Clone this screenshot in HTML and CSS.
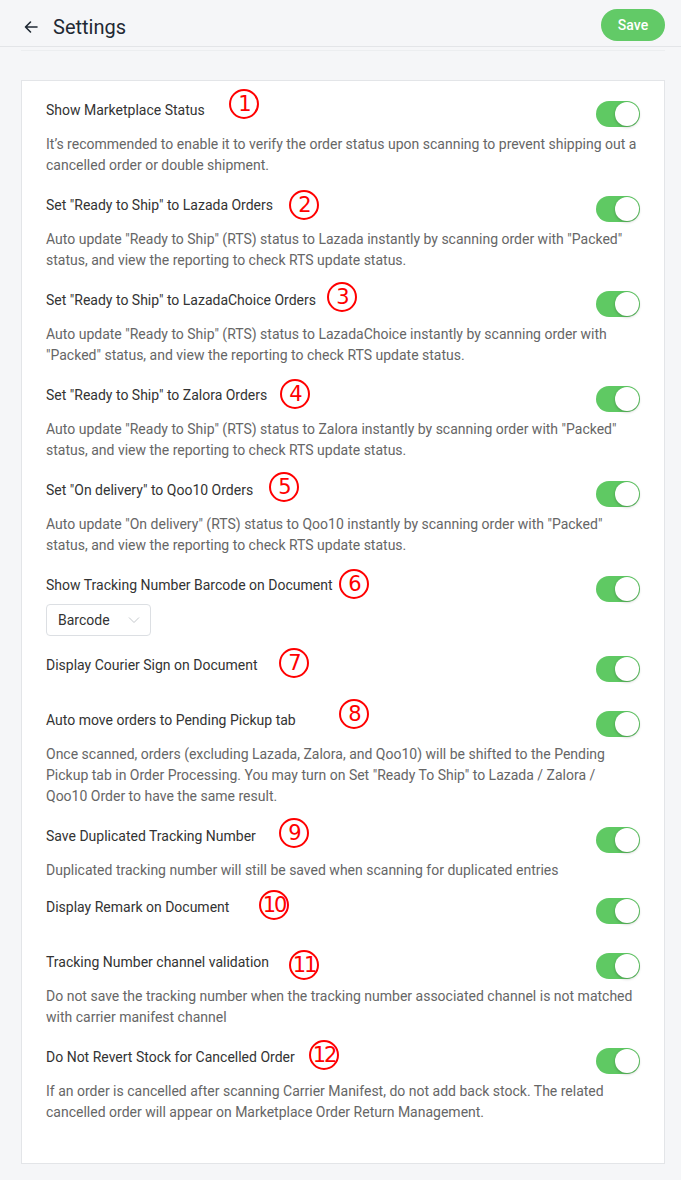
FILE: index.html
```html
<!DOCTYPE html>
<html lang="en">
<head>
  <meta charset="UTF-8">
  <title>Settings</title>
  <link rel="stylesheet" href="styles.css">
</head>
<body>

  <div class="topbar">
    <div class="topbar-left">
      <svg class="back" width="16" height="16" viewBox="0 0 16 16">
        <path d="M14 8H2.5M7.5 3L2.5 8l5 5" fill="none" stroke="#1f2933" stroke-width="1.6" stroke-linecap="round" stroke-linejoin="round"/>
      </svg>
      <h1>Settings</h1>
    </div>
    <button class="save">Save</button>
  </div>
  <div class="sub-line"></div>

  <div class="card">

    <div class="item">
      <div class="item-head">
        <span class="title">Show Marketplace Status</span>
        <span class="mark" style="left:183px;top:-11px">1</span>
        <span class="toggle"></span>
      </div>
      <p class="desc">It’s recommended to enable it to verify the order status upon scanning to prevent shipping out a cancelled order or double shipment.</p>
    </div>

    <div class="item">
      <div class="item-head">
        <span class="title">Set "Ready to Ship" to Lazada Orders</span>
        <span class="mark" style="left:243px;top:-5px">2</span>
        <span class="toggle"></span>
      </div>
      <p class="desc">Auto update "Ready to Ship" (RTS) status to Lazada instantly by scanning order with "Packed" status, and view the reporting to check RTS update status.</p>
    </div>

    <div class="item">
      <div class="item-head">
        <span class="title">Set "Ready to Ship" to LazadaChoice Orders</span>
        <span class="mark" style="left:281px;top:-8px">3</span>
        <span class="toggle"></span>
      </div>
      <p class="desc">Auto update "Ready to Ship" (RTS) status to LazadaChoice instantly by scanning order with "Packed" status, and view the reporting to check RTS update status.</p>
    </div>

    <div class="item">
      <div class="item-head">
        <span class="title">Set "Ready to Ship" to Zalora Orders</span>
        <span class="mark" style="left:234px;top:-6px">4</span>
        <span class="toggle"></span>
      </div>
      <p class="desc">Auto update "Ready to Ship" (RTS) status to Zalora instantly by scanning order with "Packed" status, and view the reporting to check RTS update status.</p>
    </div>

    <div class="item">
      <div class="item-head">
        <span class="title">Set "On delivery" to Qoo10 Orders</span>
        <span class="mark" style="left:223px;top:-8px">5</span>
        <span class="toggle"></span>
      </div>
      <p class="desc">Auto update "On delivery" (RTS) status to Qoo10 instantly by scanning order with "Packed" status, and view the reporting to check RTS update status.</p>
    </div>

    <div class="item">
      <div class="item-head">
        <span class="title">Show Tracking Number Barcode on Document</span>
        <span class="mark" style="left:293px;top:-6px">6</span>
        <span class="toggle"></span>
      </div>
      <div class="select">
        <span>Barcode</span>
        <svg width="12" height="8" viewBox="0 0 12 8">
          <path d="M1 1.5l5 5 5-5" fill="none" stroke="#c4c8cc" stroke-width="1"/>
        </svg>
      </div>
    </div>

    <div class="item plain">
      <div class="item-head">
        <span class="title">Display Courier Sign on Document</span>
        <span class="mark" style="left:233px;top:-7px">7</span>
        <span class="toggle"></span>
      </div>
    </div>

    <div class="item">
      <div class="item-head">
        <span class="title">Auto move orders to Pending Pickup tab</span>
        <span class="mark" style="left:293px;top:-11px">8</span>
        <span class="toggle"></span>
      </div>
      <p class="desc">Once scanned, orders (excluding Lazada, Zalora, and Qoo10) will be shifted to the Pending Pickup tab in Order Processing. You may turn on Set "Ready To Ship" to Lazada / Zalora / Qoo10 Order to have the same result.</p>
    </div>

    <div class="item tight">
      <div class="item-head">
        <span class="title">Save Duplicated Tracking Number</span>
        <span class="mark" style="left:233px;top:-8px">9</span>
        <span class="toggle"></span>
      </div>
      <p class="desc">Duplicated tracking number will still be saved when scanning for duplicated entries</p>
    </div>

    <div class="item plain">
      <div class="item-head">
        <span class="title">Display Remark on Document</span>
        <span class="mark" style="left:213px;top:-7px">10</span>
        <span class="toggle"></span>
      </div>
    </div>

    <div class="item">
      <div class="item-head">
        <span class="title">Tracking Number channel validation</span>
        <span class="mark" style="left:243px;top:-2px">11</span>
        <span class="toggle"></span>
      </div>
      <p class="desc">Do not save the tracking number when the tracking number associated channel is not matched with carrier manifest channel</p>
    </div>

    <div class="item">
      <div class="item-head">
        <span class="title">Do Not Revert Stock for Cancelled Order</span>
        <span class="mark" style="left:263px;top:-7px">12</span>
        <span class="toggle"></span>
      </div>
      <p class="desc">If an order is cancelled after scanning Carrier Manifest, do not add back stock. The related cancelled order will appear on Marketplace Order Return Management.</p>
    </div>

  </div>

</body>
</html>
```

FILE: styles.css
```css
body {
  margin: 0;
  font-family: Roboto, "Liberation Sans", sans-serif;
  background-color: #f5f6f8;
  color: #333;
}

.topbar {
  height: 47px;
  display: flex;
  align-items: center;
  justify-content: space-between;
  padding: 0 16px 0 23px;
  border-bottom: 1px solid #e3e5e8;
  box-sizing: border-box;
}

.topbar-left {
  display: flex;
  align-items: center;
  gap: 14px;
  margin-top: 8px;
}

.topbar h1 {
  margin: 0;
  font-size: 20px;
  font-weight: 400;
  color: #1f2933;
}

.save {
  width: 64px;
  height: 32px;
  margin-top: 4px;
  border: none;
  border-radius: 16px;
  background-color: #62ca67;
  color: white;
  font-family: Roboto, "Liberation Sans", sans-serif;
  font-size: 14px;
  font-weight: 500;
}

.sub-line {
  height: 1px;
  margin: 3px 16px 0 21px;
  background-color: #eceef0;
}

.card {
  margin: 29px 16px 17px 21px;
  background-color: white;
  border: 1px solid #e3e5e8;
  padding: 19px 23px 21px 24px;
}

.item {
  margin-bottom: 19px;
}

.item.plain {
  margin-bottom: 29px;
}

.item.tight {
  margin-bottom: 16px;
}

.item-head {
  position: relative;
  height: 26px;
  display: flex;
  align-items: center;
  justify-content: space-between;
}

.title {
  font-size: 14px;
  color: #333;
  margin-top: -6px;
}

.mark {
  position: absolute;
  width: 26px;
  height: 26px;
  border: 2.5px solid #f00;
  border-radius: 50%;
  color: #f00;
  font-family: "DejaVu Sans", sans-serif;
  font-size: 21px;
  line-height: 26px;
  text-align: center;
  letter-spacing: -2px;
}

.toggle {
  position: relative;
  width: 44px;
  height: 26px;
  margin-top: 2px;
  margin-right: 1px;
  border-radius: 13px;
  background-color: #5fc963;
}

.toggle::after {
  content: "";
  position: absolute;
  right: 1px;
  top: 1px;
  width: 24px;
  height: 24px;
  border-radius: 50%;
  background-color: white;
  box-shadow: 0 1px 3px rgba(0, 0, 0, 0.25);
}

.desc {
  margin: 8px 4px 0 0;
  font-size: 14px;
  line-height: 21px;
  color: #666;
}

.select {
  margin-top: 3px;
  width: 105px;
  height: 32px;
  box-sizing: border-box;
  border: 1px solid #dcdfe3;
  border-radius: 4px;
  display: flex;
  align-items: center;
  justify-content: space-between;
  padding: 0 10px 0 11px;
  font-size: 14px;
  color: #333;
}
```
